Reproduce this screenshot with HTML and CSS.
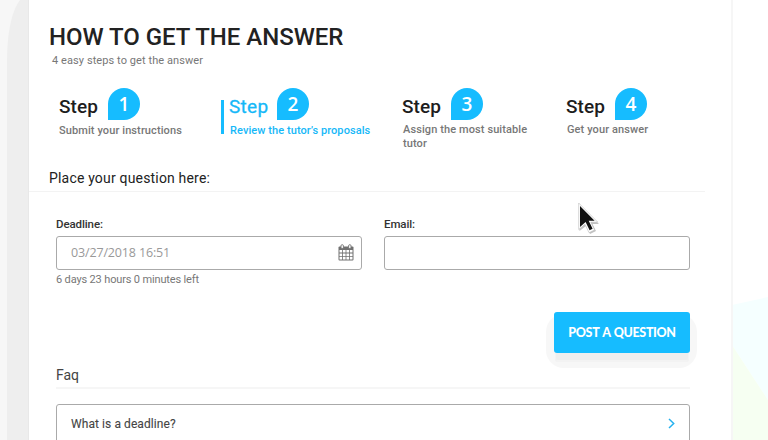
FILE: index.html
```html
<!DOCTYPE html>
<html lang="en">
<head>
<meta charset="utf-8">
<title>How to get the answer</title>
<link rel="stylesheet" href="styles.css">
</head>
<body>
<div class="page">
  <svg class="backdrop" viewBox="0 0 768 440" aria-hidden="true">
    <path d="M0 0H30V440H0Z" fill="#f7f7f7"/>
    <path d="M20 0C11 12 7 35 7 62V440H30V0Z" fill="#eee"/>
    <path d="M732 305L768 297V400L732 345Z" fill="#f5ffff"/>
    <path d="M732 345L768 400V440H732Z" fill="#f6fff2"/>
  </svg>
  <main class="panel">
    <header class="intro">
      <h1 class="title">HOW TO GET THE ANSWER</h1>
      <p class="subtitle">4 easy steps to get the answer</p>
    </header>
    <ol class="steps">
      <li class="step">
        <div class="step-head"><span class="step-word">Step</span><span class="badge">1</span></div>
        <p class="step-text">Submit your instructions</p>
      </li>
      <li class="step step-active">
        <div class="step-head"><span class="step-word">Step</span><span class="badge">2</span></div>
        <p class="step-text">Review the tutor’s proposals</p>
      </li>
      <li class="step">
        <div class="step-head"><span class="step-word">Step</span><span class="badge">3</span></div>
        <p class="step-text">Assign the most suitable<br>tutor</p>
      </li>
      <li class="step">
        <div class="step-head"><span class="step-word">Step</span><span class="badge">4</span></div>
        <p class="step-text">Get your answer</p>
      </li>
    </ol>
    <h2 class="section-title"><span class="section-label">Place your question here:</span></h2>
    <form class="form">
      <div class="fields">
        <div class="field">
          <span class="label">Deadline:</span>
          <div class="control">
            <span class="value">03/27/2018 16:51</span>
            <svg class="calendar" viewBox="0 0 16 17" aria-hidden="true">
              <path d="M1.5 2.5H14.5Q15.5 2.5 15.5 3.5V15.5Q15.5 16.5 14.5 16.5H1.5Q.5 16.5 .5 15.5V3.5Q.5 2.5 1.5 2.5Z" fill="#707070"/>
              <path d="M1.5 6H4.2V8.6H1.5ZM5 6H7.6V8.6H5ZM8.4 6H11V8.6H8.4ZM11.8 6H14.5V8.6H11.8ZM1.5 9.4H4.2V12H1.5ZM5 9.4H7.6V12H5ZM8.4 9.4H11V12H8.4ZM11.8 9.4H14.5V12H11.8ZM1.5 12.8H4.2V15.4H1.5ZM5 12.8H7.6V15.4H5ZM8.4 12.8H11V15.4H8.4ZM11.8 12.8H14.5V15.4H11.8Z" fill="#fff"/>
              <rect x="3" y=".7" width="2.4" height="3.8" rx="1.1" fill="#fff" stroke="#707070" stroke-width=".9"/>
              <rect x="10.6" y=".7" width="2.4" height="3.8" rx="1.1" fill="#fff" stroke="#707070" stroke-width=".9"/>
            </svg>
          </div>
          <span class="hint">6 days 23 hours 0 minutes left</span>
        </div>
        <div class="field">
          <span class="label">Email:</span>
          <div class="control"></div>
        </div>
      </div>
      <button class="submit" type="button"><span class="submit-text">POST A QUESTION</span></button>
    </form>
    <section class="faq">
      <h2 class="faq-title">Faq</h2>
      <div class="question">
        <span class="question-text">What is a deadline?</span>
        <svg class="chevron" viewBox="0 0 7 11" aria-hidden="true"><path d="M1 1L5.7 5.5L1 10" fill="none" stroke="#27b1ee" stroke-width="1.5"/></svg>
      </div>
    </section>
  </main>
  <svg class="cursor" viewBox="0 0 22 34" aria-hidden="true">
    <path d="M1.5 3V29L8 24L12 32L18 29L14.5 22H21Z" fill="#999" opacity=".6"/>
    <path d="M.7 1V27.5L7 22.3L11 30.7L16.6 28L12.8 20.2H19.8Z" fill="#fff" stroke="#bbb" stroke-width=".6"/>
    <path d="M2 4V25L7.6 19.9L11.6 28.2L14.6 26.7L10.7 18.7H16.6Z" fill="#111"/>
  </svg>
</div>
</body>
</html>
```

FILE: styles.css
```css
* { box-sizing: border-box; }
body { margin: 0; background: #fff; font-family: Roboto, sans-serif; color: #222; overflow: hidden; }
h1, h2, p, ol { margin: 0; padding: 0; font-weight: 400; }
.page { position: relative; width: 768px; height: 440px; overflow: hidden; }
.backdrop { position: absolute; inset: 0; width: 768px; height: 440px; }
.panel {
  position: relative;
  width: 705px;
  height: 440px;
  margin-left: 28px;
  background: #fff;
  border-left: 1px solid #e8e8e8;
  border-right: 2px solid #f6f6f6;
  overflow: hidden;
}
.intro { height: 88px; padding: 23px 0 0 20px; }
.title { font-size: 24px; line-height: 28px; font-weight: 500; letter-spacing: -.03px; white-space: nowrap; }
.subtitle { margin: 3px 0 0 3px; font-size: 11px; line-height: 14px; letter-spacing: .08px; color: #777; }
.steps {
  display: grid;
  grid-template-columns: 163px 181px 164px 130px;
  height: 76px;
  padding-left: 29px;
  list-style: none;
}
.step { white-space: nowrap; }
.step-head { display: flex; height: 32px; gap: 10px; }
.step-word { width: 40px; padding-top: 8px; font-size: 19px; line-height: 22px; font-weight: 500; letter-spacing: .1px; color: #1d1d1d; }
.badge {
  width: 32px;
  height: 32px;
  border-radius: 50% 50% 50% 0;
  background: #16bcff;
  color: #fff;
  font: 600 19px/33px "Open Sans", sans-serif;
  text-align: center;
}
.step-text { margin: 4px 0 0 1px; font-size: 11px; line-height: 14px; font-weight: 500; letter-spacing: .1px; color: #777; }
.step:first-child .step-word { padding-left: 1px; }
.step:nth-child(n + 3) .step-text { margin-top: 3px; }
.step:nth-child(n + 3) .step-head { gap: 9px; }
.step-active { height: 34px; margin-top: 12px; padding-left: 5px; border-left: 3px solid #16bcff; }
.step-active .step-head { margin-top: -12px; gap: 8px; }
.step-active .step-word, .step-active .step-text { color: #16b8f8; }
.step-active .step-text { letter-spacing: .07px; }
.step-active .step-word { font-weight: 400; letter-spacing: .3px; -webkit-text-stroke: .3px #16b8f8; }
.section-title {
  width: 676px;
  height: 28px;
  padding: 5px 0 0 20px;
  border-bottom: 1px solid #f3f3f3;
  font-size: 14px;
  line-height: 18px;
  letter-spacing: .18px;
}
.form { display: flex; flex-direction: column; height: 175px; padding: 25px 0 0 27px; }
.fields { display: grid; grid-template-columns: 306px 306px; column-gap: 22px; height: 95px; }
.field { display: flex; flex-direction: column; }
.label { height: 19px; font-size: 11.5px; line-height: 15px; font-weight: 500; letter-spacing: -.1px; color: #333; }
.control {
  display: flex;
  align-items: center;
  justify-content: space-between;
  height: 34px;
  padding: 0 7px 0 14px;
  border: 1px solid #aaa;
  border-radius: 3px;
}
.value { font: 12.5px/18px "Open Sans", sans-serif; letter-spacing: -.15px; color: #999; }
.calendar { width: 16px; height: 17px; margin-top: -1px; }
.hint { margin-top: 3px; font-size: 11px; line-height: 14px; letter-spacing: -.15px; color: #777; }
.submit {
  width: 136px;
  height: 41px;
  margin-left: 498px;
  padding: 1px 0 0;
  border: 0;
  border-radius: 3px;
  background: #16bcff;
  color: #fff;
  font: 900 12.5px/40px Lato, sans-serif;
  letter-spacing: -.35px;
  word-spacing: 1px;
  white-space: nowrap;
  box-shadow: 0 9px 1px -2px #eee, 0 10px 0 -1px #f3f3f3;
  position: relative;
}
.submit::before {
  content: "";
  position: absolute;
  z-index: -1;
  inset: 2px -7px -15px -8px;
  border-radius: 18px;
  background: #f7f7f7;
}
.form { position: relative; z-index: 0; }
.faq { padding-left: 27px; }
.faq-title { width: 634px; height: 22px; border-bottom: 2px solid #f6f6f6; font-size: 14px; line-height: 17px; letter-spacing: -.1px; color: #444; }
.question {
  display: flex;
  align-items: center;
  justify-content: space-between;
  width: 634px;
  height: 40px;
  margin-top: 15px;
  padding: 0 14px 1px;
  border: 1px solid #aaa;
  border-radius: 3px;
}
.question-text { font-size: 12px; font-weight: 400; letter-spacing: .08px; color: #444; -webkit-text-stroke: .1px #444; }
.chevron { width: 7px; height: 11px; }
.cursor { position: absolute; left: 578px; top: 202px; width: 22px; height: 34px; }
```
